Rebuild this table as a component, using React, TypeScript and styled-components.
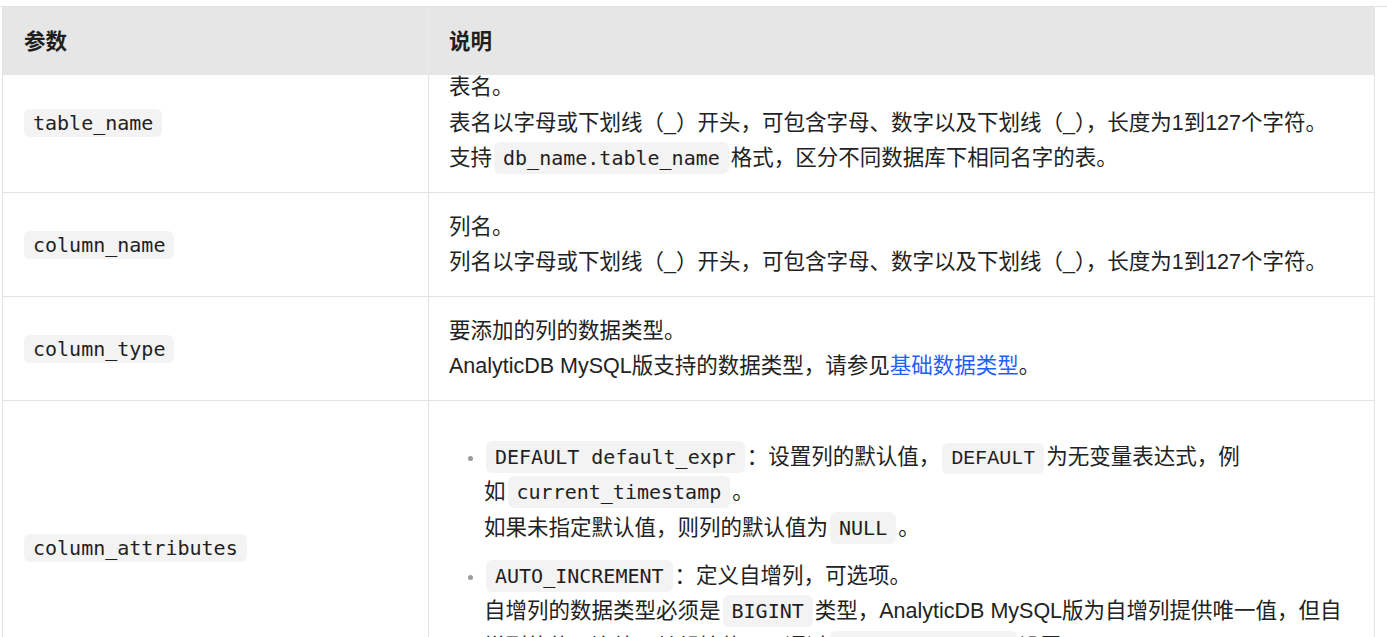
import React from "react";
import styled, { createGlobalStyle, css } from "styled-components";

const GlobalStyle = createGlobalStyle`
  html, body {
    margin: 0;
    padding: 0;
    background: #ffffff;
  }
  body {
    font-family: "Liberation Sans", "Noto Sans CJK SC", sans-serif;
    color: #222222;
    overflow: hidden;
  }
`;

const Page = styled.div`
  padding-top: 6px;
  height: 637px;
  box-sizing: border-box;
  overflow: hidden;
`;

const Frame = styled.div`
  border-top: 1px solid #e2e2e2;
`;

const Table = styled.div`
  margin-left: 2px;
  width: 1373px;
  box-sizing: border-box;
  border-left: 1px solid #e3e3e3;
  border-right: 1px solid #e3e3e3;
  font-size: 21.5px;
  line-height: 35.5px;
`;

const HeaderRow = styled.div`
  position: relative;
  z-index: 1;
  display: grid;
  grid-template-columns: 426px 1fr;
  height: 68px;
  background: #e6e6e6;
`;

const HeaderCell = styled.div<{ $first?: boolean }>`
  display: flex;
  align-items: center;
  padding: 4px 20px 0 ${(p) => (p.$first ? "21px" : "20px")};
  font-weight: 700;
  color: #1f1f1f;
  ${(p) =>
    p.$first &&
    css`
      border-right: 1px solid #ededed;
    `}
`;

const Body = styled.div`
  margin-top: -22px;
`;

const Row = styled.div`
  display: grid;
  grid-template-columns: 426px 1fr;
  border-bottom: 1px solid #e3e3e3;
`;

const ParamCell = styled.div`
  display: flex;
  align-items: center;
  padding: 17px 19px 15px;
  border-right: 1px solid #e3e3e3;
`;

const DescCell = styled.div`
  padding: 17px 20px 15px;
`;

const Line = styled.p`
  margin: 0;
`;

const Code = styled.code<{ $variant?: "plain" | "sans" }>`
  font-family: ${(p) =>
    p.$variant === "sans"
      ? `"Liberation Mono", monospace`
      : `"DejaVu Sans Mono", monospace`};
  font-size: 20px;
  line-height: 1;
  background: #f3f3f3;
  color: #1f1f1f;
  border-radius: 6px;
  padding: 4px 9px;
  margin: 0 2px;
`;

const Link = styled.a`
  color: #1f5fff;
  text-decoration: none;
`;

const List = styled.ul`
  list-style: none;
  margin: 22px 0 14px;
  padding: 0 0 0 19px;
  display: flex;
  flex-direction: column;
  gap: 12.5px;
`;

const Item = styled.li`
  display: flex;
  align-items: flex-start;
`;

const Bullet = styled.span`
  flex-shrink: 0;
  width: 5px;
  height: 5px;
  border-radius: 50%;
  background: #9a9a9a;
  margin: 16px 11px 0 0;
`;

const ItemBody = styled.div`
  flex: 1;
  min-width: 0;
`;

export default function App() {
  return (
    <>
      <GlobalStyle />
      <Page>
        <Frame>
          <Table>
            <HeaderRow>
              <HeaderCell $first>参数</HeaderCell>
              <HeaderCell>说明</HeaderCell>
            </HeaderRow>
            <Body>
              <Row>
                <ParamCell>
                  <Code>table_name</Code>
                </ParamCell>
                <DescCell>
                  <Line>表名。</Line>
                  <Line>
                    表名以字母或下划线（_）开头，可包含字母、数字以及下划线（_），长度为1到127个字符。
                  </Line>
                  <Line>
                    支持<Code>db_name.table_name</Code>格式，区分不同数据库下相同名字的表。
                  </Line>
                </DescCell>
              </Row>
              <Row>
                <ParamCell>
                  <Code>column_name</Code>
                </ParamCell>
                <DescCell>
                  <Line>列名。</Line>
                  <Line>
                    列名以字母或下划线（_）开头，可包含字母、数字以及下划线（_），长度为1到127个字符。
                  </Line>
                </DescCell>
              </Row>
              <Row>
                <ParamCell>
                  <Code>column_type</Code>
                </ParamCell>
                <DescCell>
                  <Line>要添加的列的数据类型。</Line>
                  <Line>
                    AnalyticDB MySQL版支持的数据类型，请参见
                    <Link href="#">基础数据类型</Link>。
                  </Line>
                </DescCell>
              </Row>
              <Row>
                <ParamCell>
                  <Code>column_attributes</Code>
                </ParamCell>
                <DescCell>
                  <List>
                    <Item>
                      <Bullet />
                      <ItemBody>
                        <Code>DEFAULT default_expr</Code>：设置列的默认值，
                        <Code $variant="sans">DEFAULT</Code>为无变量表达式，例
                        <br />
                        如<Code>current_timestamp</Code>。
                        <br />
                        如果未指定默认值，则列的默认值为<Code>NULL</Code>。
                      </ItemBody>
                    </Item>
                    <Item>
                      <Bullet />
                      <ItemBody>
                        <Code>AUTO_INCREMENT</Code>：定义自增列，可选项。
                        <br />
                        自增列的数据类型必须是<Code>BIGINT</Code>
                        类型，AnalyticDB MySQL版为自增列提供唯一值，但自增列的值不连续，其起始值可以通过
                        <Code>auto_increment</Code>设置。
                      </ItemBody>
                    </Item>
                  </List>
                </DescCell>
              </Row>
            </Body>
          </Table>
        </Frame>
      </Page>
    </>
  );
}
